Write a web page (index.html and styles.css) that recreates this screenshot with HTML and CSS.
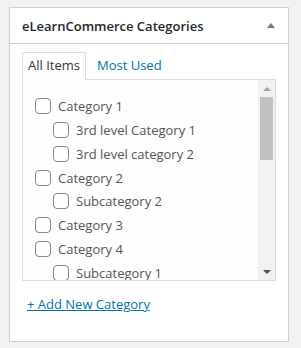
FILE: index.html
```html
<!DOCTYPE html>
<html lang="en">
<head>
    <meta charset="UTF-8">
    <meta name="viewport" content="width=device-width, initial-scale=1.0">
    <title>eLearnCommerce Categories</title>
    <link rel="stylesheet" href="styles.css">
</head>
<body>
    <div class="postbox">
        <div class="postbox-header">
            <h2 class="hndle">eLearnCommerce Categories</h2>
            <span class="toggle-arrow"></span>
        </div>

        <div class="inside">
            <ul class="category-tabs">
                <li class="tabs"><a href="#">All Items</a></li>
                <li><a href="#">Most Used</a></li>
            </ul>

            <div class="tabs-panel">
                <ul class="categorychecklist">
                    <li><label><input type="checkbox"> Category 1</label></li>
                    <li class="child"><label><input type="checkbox"> 3rd level Category 1</label></li>
                    <li class="child"><label><input type="checkbox"> 3rd level category 2</label></li>
                    <li><label><input type="checkbox"> Category 2</label></li>
                    <li class="child"><label><input type="checkbox"> Subcategory 2</label></li>
                    <li><label><input type="checkbox"> Category 3</label></li>
                    <li><label><input type="checkbox"> Category 4</label></li>
                    <li class="child"><label><input type="checkbox"> Subcategory 1</label></li>
                </ul>

                <!-- fake scrollbar so it looks the same everywhere -->
                <div class="scrollbar">
                    <div class="scroll-btn"><span class="arrow-up"></span></div>
                    <div class="scroll-thumb"></div>
                    <div class="scroll-track"></div>
                    <div class="scroll-btn"><span class="arrow-down"></span></div>
                </div>
            </div>

            <p class="add-new"><a href="#">+ Add New Category</a></p>
        </div>
    </div>
</body>
</html>
```

FILE: styles.css
```css
body {
    margin: 0;
    background-color: #f1f1f1;
    font-family: "Open Sans", "Noto Sans", sans-serif;
    font-size: 13px;
    color: #555;
}

ul {
    list-style: none;
    margin: 0;
    padding: 0;
}

a {
    color: #0073aa;
    text-decoration: none;
}

.postbox {
    width: 280px;
    box-sizing: border-box;
    margin: 7px 0 0 9px;
    background-color: #fff;
    border: 1px solid #ccd0d4;
}

.postbox-header {
    height: 35px;
    display: flex;
    align-items: center;
    justify-content: space-between;
    padding: 0 13px 0 12px;
    border-bottom: 1px solid #ccd0d4;
}

.hndle {
    margin: 0;
    font-size: 13px;
    font-weight: 600;
    color: #23282d;
}

.toggle-arrow {
    width: 0;
    height: 0;
    border-left: 4px solid transparent;
    border-right: 4px solid transparent;
    border-bottom: 5px solid #72777c;
    margin-top: -1px;
}

.inside {
    padding: 8px 12px 27px;
}

.category-tabs {
    display: flex;
    gap: 5px;
    margin-bottom: -1px;
}

.category-tabs li {
    padding: 3px 5px 5px;
    line-height: 18px;
    border: 1px solid transparent;
    border-bottom: none;
}

.category-tabs li.tabs {
    background-color: #fdfdfd;
    border-color: #ddd;
    padding-bottom: 6px;
}

.category-tabs li.tabs a {
    color: #32373c;
}

.tabs-panel {
    height: 200px;
    display: flex;
    background-color: #fdfdfd;
    border: 1px solid #ddd;
}

.categorychecklist {
    flex: 1;
    overflow: hidden;
    padding: 14px 0 0 12px;
}

.categorychecklist li {
    height: 23.86px;
    display: flex;
    align-items: center;
}

.categorychecklist li.child {
    padding-left: 18px;
}

.categorychecklist label {
    display: flex;
    align-items: center;
    white-space: nowrap;
}

input[type="checkbox"] {
    appearance: none;
    -webkit-appearance: none;
    width: 16px;
    height: 16px;
    margin: 0 7px 0 0;
    background-color: #fff;
    border: 1px solid #7e8993;
    border-radius: 4px;
    flex-shrink: 0;
}

.scrollbar {
    width: 17px;
    display: flex;
    flex-direction: column;
    background-color: #f1f1f1;
}

.scroll-btn {
    height: 17px;
    display: flex;
    align-items: center;
    justify-content: center;
}

.arrow-up {
    width: 0;
    height: 0;
    border-left: 4px solid transparent;
    border-right: 4px solid transparent;
    border-bottom: 4px solid #a3a3a3;
}

.arrow-down {
    width: 0;
    height: 0;
    border-left: 4px solid transparent;
    border-right: 4px solid transparent;
    border-top: 4px solid #505050;
}

.scroll-thumb {
    height: 63px;
    margin: 0 2px;
    background-color: #c1c1c1;
}

.scroll-track {
    flex: 1;
}

.add-new {
    margin: 13px 0 0 5px;
    line-height: 20px;
}

.add-new a {
    text-decoration: underline;
}
```
